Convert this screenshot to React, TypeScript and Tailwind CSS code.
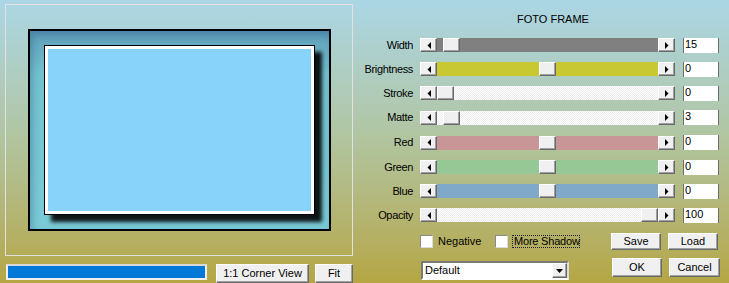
import React from "react";

const raised =
  "bg-[#f0f0f0] border border-t-white border-l-white border-r-[#696969] border-b-[#696969] shadow-[inset_-1px_-1px_0_#a0a0a0]";

function ArrowLeft() {
  return (
    <svg width="4" height="7" viewBox="0 0 4 7">
      <polygon points="4,0 4,7 0.5,3.5" fill="#000" />
    </svg>
  );
}
function ArrowRight() {
  return (
    <svg width="4" height="7" viewBox="0 0 4 7">
      <polygon points="0,0 0,7 3.5,3.5" fill="#000" />
    </svg>
  );
}

const checker =
  "bg-[repeating-conic-gradient(#ffffff_0_25%,#ececec_0_50%)] bg-[length:2px_2px]";

type Row = {
  label: string;
  track: string;
  thumb: number;
  value: string;
  h: string;
};

const rows: Row[] = [
  { label: "Width", track: "bg-[#808080]", thumb: 6, value: "15", h: "h-[24px]" },
  { label: "Brightness", track: "bg-[#c8c832]", thumb: 102, value: "0", h: "h-[24px]" },
  { label: "Stroke", track: checker, thumb: 0, value: "0", h: "h-[24px]" },
  { label: "Matte", track: checker, thumb: 6, value: "3", h: "h-[25px]" },
  { label: "Red", track: "bg-[#c89696]", thumb: 102, value: "0", h: "h-[25px]" },
  { label: "Green", track: "bg-[#96c896]", thumb: 102, value: "0", h: "h-[24px]" },
  { label: "Blue", track: "bg-[#80a8c8]", thumb: 102, value: "0", h: "h-[24px]" },
  { label: "Opacity", track: checker, thumb: 204, value: "100", h: "h-[24px]" },
];

function SliderRow({ r }: { r: Row }) {
  return (
    <div className={`flex items-center ${r.h}`}>
      <div className="w-[53px] text-right leading-none tracking-[-0.35px]">{r.label}</div>
      <div className="ml-[7px] flex w-[255px] h-[14px]">
        <div className={`${raised} w-[17px] h-[14px] flex items-center justify-center`}>
          <ArrowLeft />
        </div>
        <div className={`relative flex-1 h-[14px] ${r.track}`}>
          <div
            className={`${raised} absolute top-0 w-[17px] h-[14px]`}
            style={{ left: r.thumb }}
          />
        </div>
        <div className={`${raised} w-[17px] h-[14px] flex items-center justify-center`}>
          <ArrowRight />
        </div>
      </div>
      <div className="ml-[8px] w-[36px] h-[15px] bg-white border-x border-[#6d6d6d] pl-[1px] leading-[13px]">
        {r.value}
      </div>
    </div>
  );
}

export default function App() {
  return (
    <div
      className="w-[729px] h-[283px] overflow-hidden flex bg-gradient-to-b from-[#abd6e6] via-[#b1c49e] to-[#b5a642] text-black text-[11px]"
      style={{ fontFamily: '"Liberation Sans", Arial, sans-serif' }}
    >
      {/* Left */}
      <div className="w-[360px] pl-[5px] pt-[4px] flex flex-col">
        <div className="w-[348px] h-[254px] border border-[#e2e2e2] flex items-center justify-center">
          <div className="w-[303px] h-[202px] border-2 border-black flex items-center justify-center bg-[linear-gradient(180deg,#5f9db8_0%,#74c2d0_22%,#7acbd7_100%)] shadow-[inset_3px_4px_7px_rgba(30,70,120,0.3)]">
            <div className="w-[271px] h-[170px] border border-black bg-white p-[3px] shadow-[7px_7px_4px_rgba(0,0,0,0.9)]">
              <div className="w-full h-full bg-[#87d3f9]" />
            </div>
          </div>
        </div>
        <div className="mt-[8px] flex items-start">
          <div className="ml-[1px] w-[201px] h-[16px] border-2 border-[#efefef] border-t-[#d8d8d8] bg-[#0078d7]" />
          <div className={`${raised} ml-[9px] w-[93px] h-[19px] flex items-center justify-center`}>
            1:1 Corner View
          </div>
          <div className={`${raised} ml-[6px] w-[38px] h-[19px] flex items-center justify-center`}>
            Fit
          </div>
        </div>
      </div>

      {/* Right */}
      <div className="flex flex-col">
        <div className="h-[33px] pt-[14px] pl-[157px] leading-none">FOTO FRAME</div>
        {rows.map((r) => (
          <SliderRow key={r.label} r={r} />
        ))}
        <div className="mt-[4px] h-[20px] flex items-center pl-[60px]">
          <div className="w-[13px] h-[13px] bg-white border border-[#8a8a8a] border-b-[#dcdcdc] border-r-[#dcdcdc]" />
          <span className="ml-[5px] w-[57px] leading-none">Negative</span>
          <div className="w-[13px] h-[13px] bg-white border border-[#8a8a8a] border-b-[#dcdcdc] border-r-[#dcdcdc]" />
          <span className="ml-[4px] w-[68px] px-[1px] border border-dotted border-[#202040] leading-[11px] tracking-[-0.2px] whitespace-nowrap">
            More Shadow
          </span>
          <div className={`${raised} ml-[31px] w-[50px] h-[17px] flex items-center justify-center`}>
            Save
          </div>
          <div className={`${raised} ml-[7px] w-[50px] h-[17px] flex items-center justify-center`}>
            Load
          </div>
        </div>
        <div className="mt-[5px] flex items-start pl-[61px]">
          <div className="mt-[5px] w-[148px] h-[19px] bg-white border-2 border-t-[#7a7a7a] border-l-[#7a7a7a] border-r-[#dcdcdc] border-b-white flex items-center">
            <span className="flex-1 pl-[2px] leading-none">Default</span>
            <div className={`${raised} w-[15px] h-[15px] flex items-center justify-center`}>
              <svg width="7" height="4" viewBox="0 0 7 4">
                <polygon points="0,0 7,0 3.5,4" fill="#000" />
              </svg>
            </div>
          </div>
          <div className={`${raised} mt-[2px] ml-[43px] w-[50px] h-[19px] flex items-center justify-center`}>
            OK
          </div>
          <div className={`${raised} mt-[2px] ml-[7px] w-[51px] h-[19px] flex items-center justify-center`}>
            Cancel
          </div>
        </div>
      </div>
    </div>
  );
}
